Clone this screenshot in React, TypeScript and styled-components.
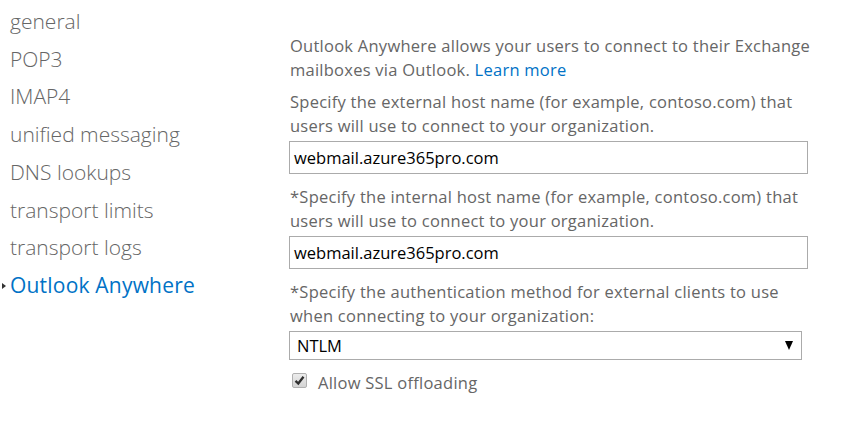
import React from "react";
import styled, { createGlobalStyle } from "styled-components";

const Global = createGlobalStyle`
  html, body { margin: 0; padding: 0; background: #fff; }
  body { font-family: "Open Sans", "Noto Sans", sans-serif; }
`;

const Page = styled.div`
  display: flex;
  width: 844px;
  height: 427px;
  overflow: hidden;
  background: #fff;
`;

const Nav = styled.ul`
  list-style: none;
  margin: 0;
  padding: 3px 0 0 10px;
  width: 280px;
  flex: none;
`;

const NavItem = styled.li<{ $active?: boolean }>`
  position: relative;
  font-size: 21px;
  font-weight: ${(p) => (p.$active ? 400 : 300)};
  line-height: 37.7px;
  color: ${(p) => (p.$active ? "#0072c6" : "#666")};
  white-space: nowrap;
  letter-spacing: ${(p) => (p.$active ? "0.2px" : "0")};
`;

const Bullet = styled.span`
  position: absolute;
  left: -8px;
  top: 16px;
  width: 0;
  height: 0;
  border-top: 3px solid transparent;
  border-bottom: 3px solid transparent;
  border-left: 4px solid #333;
`;

const Content = styled.div`
  display: flex;
  flex-direction: column;
  padding-top: 34px;
  width: 526px;
`;

const Para = styled.p<{ $tight?: boolean }>`
  margin: 0 0 ${(p) => (p.$tight ? "3px" : "8px")};
  font-size: 16.5px;
  letter-spacing: 0.25px;
  line-height: 24px;
  color: #666;
`;

const Link = styled.a`
  color: #0072c6;
  text-decoration: none;
`;

const TextInput = styled.div`
  box-sizing: border-box;
  width: 519px;
  height: 33px;
  border: 1px solid #ababab;
  padding: 0 4px;
  font-size: 16.5px;
  line-height: 31px;
  color: #000;
  margin-bottom: 11px;
  margin-left: -1px;
`;

const Select = styled.div`
  box-sizing: border-box;
  display: flex;
  align-items: center;
  justify-content: space-between;
  width: 513px;
  height: 29px;
  border: 1px solid #ababab;
  padding: 0 8px 0 7px;
  font-size: 16.5px;
  color: #000;
  margin-left: -1px;
  margin-bottom: 11px;
`;

const Arrow = styled.span`
  width: 0;
  height: 0;
  border-left: 4px solid transparent;
  border-right: 4px solid transparent;
  border-top: 9px solid #000;
`;

const CheckRow = styled.label`
  display: flex;
  align-items: center;
  gap: 11px;
  padding-left: 2px;
  font-size: 16.5px;
  letter-spacing: 0.25px;
  color: #666;
`;

const Box = styled.span`
  box-sizing: border-box;
  width: 15px;
  height: 15px;
  margin-top: -5px;
  border: 1px solid #b0b0b0;
  border-radius: 2px;
  background: linear-gradient(#ececec, #d4d4d4);
  display: flex;
  align-items: center;
  justify-content: center;
`;

const navItems = [
  "general",
  "POP3",
  "IMAP4",
  "unified messaging",
  "DNS lookups",
  "transport limits",
  "transport logs",
];

export default function App() {
  return (
    <Page>
      <Global />
      <Nav>
        {navItems.map((n) => (
          <NavItem key={n}>{n}</NavItem>
        ))}
        <NavItem $active>
          <Bullet />
          Outlook Anywhere
        </NavItem>
      </Nav>
      <Content>
        <Para>
          Outlook Anywhere allows your users to connect to their Exchange
          mailboxes via Outlook. <Link>Learn more</Link>
        </Para>
        <Para $tight>
          Specify the external host name (for example, contoso.com) that users
          will use to connect to your organization.
        </Para>
        <TextInput>webmail.azure365pro.com</TextInput>
        <Para $tight>
          *Specify the internal host name (for example, contoso.com) that users
          will use to connect to your organization.
        </Para>
        <TextInput>webmail.azure365pro.com</TextInput>
        <Para $tight>
          *Specify the authentication method for external clients to use when
          connecting to your organization:
        </Para>
        <Select>
          <span>NTLM</span>
          <Arrow />
        </Select>
        <CheckRow>
          <Box>
            <svg width="11" height="11" viewBox="0 0 11 11">
              <path d="M1.5 5.8 L4.3 8.5 L9.5 1.8" fill="none" stroke="#2e2e2e" strokeWidth="2.3" />
            </svg>
          </Box>
          Allow SSL offloading
        </CheckRow>
      </Content>
    </Page>
  );
}
